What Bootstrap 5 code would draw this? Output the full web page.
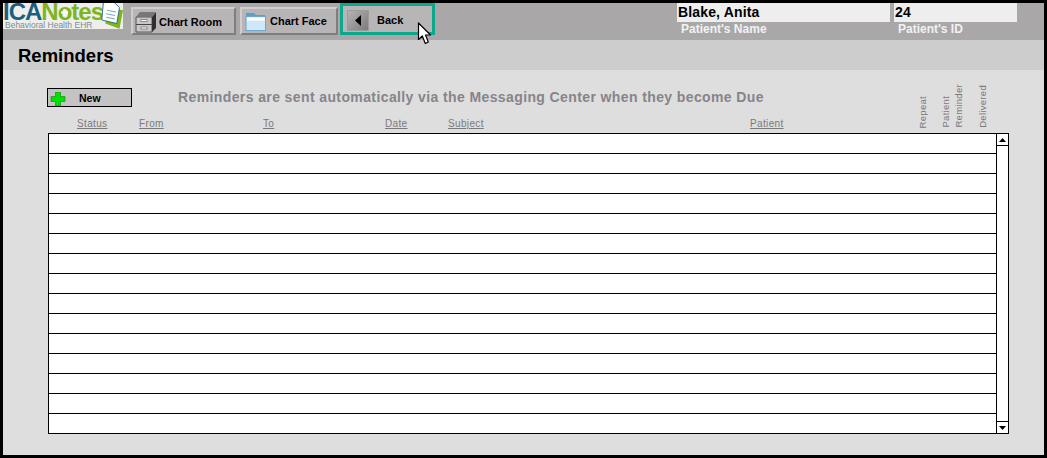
<!DOCTYPE html>
<html lang="en">
<head>
<meta charset="utf-8">
<title>Reminders</title>
<link href="https://cdn.jsdelivr.net/npm/bootstrap@5.3.0/dist/css/bootstrap.min.css" rel="stylesheet">
<style>
html,body{margin:0;height:458px;overflow:hidden;background:#000;}
body{font-family:"Liberation Sans",Arial,sans-serif;color:#000;}
.app-frame{position:relative;width:1047px;height:458px;border:3px solid #000;background:#dedede;}
.top-strip{height:37px;background:#a9a7a8;}
.logo-box{width:120px;height:26px;background:#eeeeec;position:relative;line-height:1;}
.logo-main{font-size:24px;font-weight:700;letter-spacing:-1px;color:#1a5f80;display:block;height:18px;line-height:18px;white-space:nowrap;}
.logo-main b{color:#7fb51c;}
.logo-sub{font-size:8.5px;color:#7d8c92;display:block;padding-left:2px;line-height:8px;white-space:nowrap;}
.logo-doc{position:absolute;left:97px;top:0;}
.logo-cross{position:absolute;left:58px;top:6px;}
.tool-btn{height:28px;background:#b8b5b6;border:2px solid;border-color:#cfcdce #7f7d7e #7f7d7e #cfcdce;font-size:11px;font-weight:700;display:flex;align-items:center;color:#000;padding:0;border-radius:0;margin-top:4px;}
.btn-room{width:105px;margin-left:8px;padding-top:2px;}
.btn-face{width:98px;margin-left:4px;}
.btn-back{width:95px;height:32px;margin-left:2px;border:3px solid #0ca88c;margin-top:0;padding-top:3px;}
.room-ico{margin:0 2px;}
.face-ico{margin:0 4px 0 3px;}
.back-key{width:22px;height:21px;margin-left:4px;background:linear-gradient(135deg,#b5b3b4,#7d7b7c);border:1px solid #9c9a9b;display:flex;align-items:center;justify-content:center;}
.back-txt{margin-left:8px;}
.pt-block{font-weight:700;}
.pt-name{width:213px;margin-right:4px;}
.pt-id{width:123px;margin-right:27px;}
.pt-val{background:#eeeeee;height:19px;font-size:14px;line-height:18px;padding-left:1px;letter-spacing:.15px;}
.pt-cap{color:#f2f2f2;font-size:12px;line-height:14px;padding-left:4px;}
.title-band{height:30px;background:#cdcdcd;font-size:18.5px;font-weight:700;line-height:31px;padding-left:15px;}
.new-btn{width:85px;height:19px;margin-left:44px;margin-top:18px;background:#c4c2c3;border:1px solid #000;border-radius:0;font-size:10.5px;font-weight:700;padding:2px 0 0 2px;display:flex;align-items:center;color:#000;}
.new-txt{margin-left:13px;}
.notice{font-size:14px;font-weight:700;color:#86848a;margin-left:46px;margin-top:18px;line-height:18px;white-space:nowrap;letter-spacing:.39px;}
.head-row{height:16px;margin-top:10px;padding-left:74px;}
.col-lnk{font-size:10px;line-height:14px;color:#7b797a;text-decoration:underline;letter-spacing:.35px;flex:none;}
.c-status{width:62px;}
.c-from{width:124px;}
.c-to{width:122px;}
.c-date{width:63px;}
.c-subject{width:302px;}
.c-patient{width:167px;}
.vert-lbl{writing-mode:vertical-rl;transform:rotate(180deg);font-size:9.5px;line-height:12.500px;letter-spacing:.3px;color:#7b797a;text-align:left;white-space:nowrap;align-self:flex-end;margin-bottom:5px;flex:none;}
.v-repeat{width:23px;}
.v-reminder{width:37px;}
.grid-wrap{margin-left:45px;width:961px;}
.grid-rows{width:949px;border:1px solid #000;background:#fff;}
.grid-line{height:20px;border-top:1px solid #000;}
.grid-line:first-child{height:19px;border-top:0;}
.scroll-col{width:12px;border:1px solid #000;border-left:0;background:#fff;display:flex;flex-direction:column;justify-content:space-between;}
.scroll-key{height:12px;display:flex;align-items:center;justify-content:center;}
.scroll-key.up{border-bottom:1px solid #000;}
.scroll-key.down{border-top:1px solid #000;}
.cursor-mark{position:absolute;left:414px;top:19px;}
</style>
</head>
<body>
<div class="app-frame">
  <div class="top-strip d-flex align-items-start">
    <div class="logo-box flex-shrink-0">
      <span class="logo-main">ICA<b>Notes</b></span>
      <span class="logo-sub">Behavioral Health EHR</span>
      <svg class="logo-cross" width="7" height="7" viewBox="0 0 7 7"><path d="M2.500 0h2v2.500H7v2H4.500V7h-2V4.500H0v-2h2.500Z" fill="#fff"/></svg>
      <svg class="logo-doc" width="23" height="26" viewBox="0 0 26 29"><path d="M8 5 L26 8 L22 29 L6 23 Z" fill="#7fb51c"/><path d="M4 -3 L16 -1 L22 5 L19 23 L2 19 Z" fill="#fff" stroke="#1a5f80" stroke-width="1"/><path d="M8 8l10 2M7 12l10 2M7 16l10 2" stroke="#7fa8c0" stroke-width="1.200"/></svg>
    </div>
    <button type="button" class="btn tool-btn btn-room flex-shrink-0">
      <svg class="room-ico" width="22" height="22" viewBox="0 0 22 22"><path d="M1 6 L17 6 L17 21 L1 21Z" fill="#c9c7c8" stroke="#555"/><path d="M17 6 L21 1 L21 17 L17 21Z" fill="#2f2f2f"/><path d="M1 6 L5 1 L21 1 L17 6Z" fill="#777"/><path d="M1 13.500h16" stroke="#444"/><rect x="6" y="8.500" width="6" height="2" fill="#fff" stroke="#555" stroke-width=".6"/><rect x="6" y="16" width="6" height="2" fill="#fff" stroke="#555" stroke-width=".6"/></svg>
      Chart Room
    </button>
    <button type="button" class="btn tool-btn btn-face flex-shrink-0">
      <svg class="face-ico" width="21" height="20" viewBox="0 0 21 20"><path d="M1 2h8l2 2h9v15H1Z" fill="#5d9ecb"/><rect x="1" y="5.500" width="19.500" height="14" fill="#cfe8f8" stroke="#6fa6cc"/><rect x="2" y="6.500" width="18" height="3" fill="#fff"/></svg>
      Chart Face
    </button>
    <button type="button" class="btn tool-btn btn-back flex-shrink-0">
      <span class="back-key"><svg width="6" height="11" viewBox="0 0 6 11"><path d="M6 0v11L0 5.500Z" fill="#000"/></svg></span>
      <span class="back-txt">Back</span>
    </button>
    <div class="pt-block pt-name ms-auto">
      <div class="pt-val">Blake, Anita</div>
      <div class="pt-cap">Patient's Name</div>
    </div>
    <div class="pt-block pt-id">
      <div class="pt-val">24</div>
      <div class="pt-cap">Patient's ID</div>
    </div>
  </div>
  <div class="title-band">Reminders</div>
  <div class="d-flex">
    <button type="button" class="btn new-btn flex-shrink-0">
      <svg width="16" height="14" viewBox="0 0 16 14"><path d="M5.500 0h5v4.500H15v5h-4.500V14h-5V9.500H1v-5h4.500Z" fill="#00e000" stroke="#0a8a0a" stroke-width=".6"/></svg>
      <span class="new-txt">New</span>
    </button>
    <div class="notice">Reminders are sent automatically via the Messaging Center when they become Due</div>
  </div>
  <div class="head-row d-flex align-items-start">
    <a class="col-lnk c-status" href="#">Status</a>
    <a class="col-lnk c-from" href="#">From</a>
    <a class="col-lnk c-to" href="#">To</a>
    <a class="col-lnk c-date" href="#">Date</a>
    <a class="col-lnk c-subject" href="#">Subject</a>
    <a class="col-lnk c-patient" href="#">Patient</a>
    <div class="vert-lbl v-repeat">Repeat</div>
    <div class="vert-lbl v-reminder">Patient<br>Reminder</div>
    <div class="vert-lbl">Delivered</div>
  </div>
  <div class="grid-wrap d-flex">
    <div class="grid-rows flex-shrink-0">
      <div class="grid-line"></div><div class="grid-line"></div><div class="grid-line"></div><div class="grid-line"></div><div class="grid-line"></div>
      <div class="grid-line"></div><div class="grid-line"></div><div class="grid-line"></div><div class="grid-line"></div><div class="grid-line"></div>
      <div class="grid-line"></div><div class="grid-line"></div><div class="grid-line"></div><div class="grid-line"></div><div class="grid-line"></div>
    </div>
    <div class="scroll-col flex-shrink-0">
      <div class="scroll-key up"><svg width="7" height="4" viewBox="0 0 7 4"><path d="M3.500 0L7 4H0Z" fill="#000"/></svg></div>
      <div class="scroll-key down"><svg width="7" height="4" viewBox="0 0 7 4"><path d="M3.500 4L7 0H0Z" fill="#000"/></svg></div>
    </div>
  </div>
  <svg class="cursor-mark" width="15" height="23" viewBox="0 0 15 23"><path d="M1.500 1V17.500L5.300 14L8.300 21.500L11.300 20L8.500 13H13.500Z" fill="#fff" stroke="#000" stroke-width="1.200" stroke-linejoin="round"/></svg>
</div>
<script src="https://cdn.jsdelivr.net/npm/bootstrap@5.3.0/dist/js/bootstrap.bundle.min.js"></script>
</body>
</html>
